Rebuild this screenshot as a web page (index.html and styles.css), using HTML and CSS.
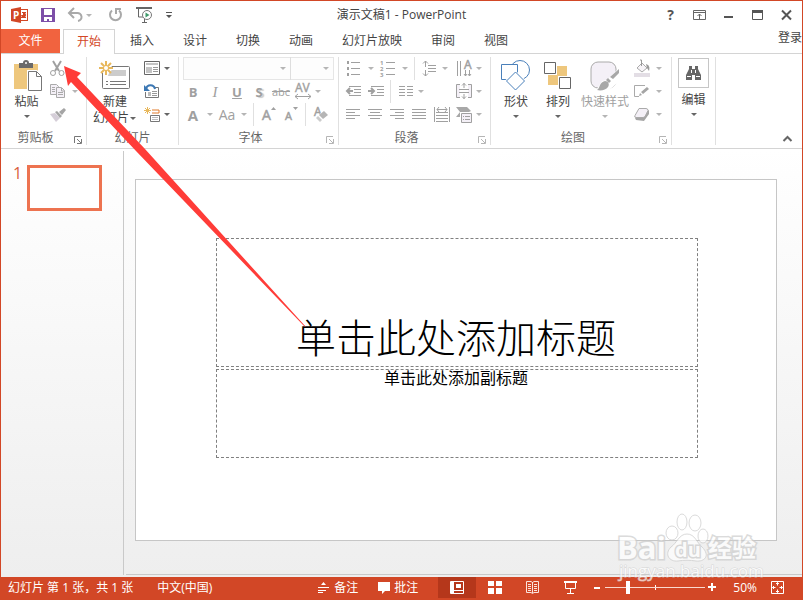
FILE: index.html
```
<!DOCTYPE html>
<html lang="zh-CN">
<head>
    <meta charset="UTF-8">
    <meta name="viewport" content="width=device-width, initial-scale=1.0">
    <title>演示文稿1 - PowerPoint</title>
    <link rel="stylesheet" href="styles.css">
</head>
<body>
    <header class="titlebar">
        <div class="quick">
            <svg class="logo" width="17" height="16" viewBox="0 0 17 16">
                <rect x="8.5" y="2.5" width="8" height="11" fill="#fff" stroke="#d24726"/>
                <path d="M11 5.500h4M10 10.500h5" stroke="#d24726"/>
                <path d="M10 8h2V5.500a2.500 2.500 0 1 1-2 2.500z" fill="#d24726"/>
                <path d="M0 2l10-2v16L0 14z" fill="#d24726"/>
                <text x="2" y="12" font-size="10" font-weight="bold" fill="#fff">P</text>
            </svg>
            <button class="quick-btn" aria-label="保存">
                <svg width="14" height="14" viewBox="0 0 14 14"><path d="M0 0h14v14H0z" fill="#7d4fa8"/><path d="M3 1h8v6H3zM3 9h8v4H8v-2H6v2H3z" fill="#fff"/></svg>
            </button>
            <button class="quick-btn" aria-label="撤消">
                <svg width="15" height="14" viewBox="0 0 15 14"><path d="M2 5h7a4 4 0 0 1 1 8" fill="none" stroke="#a9a9a9" stroke-width="2"/><path d="M6 0L1 5l5 5" fill="none" stroke="#a9a9a9" stroke-width="2"/></svg>
                <span class="drop off"></span>
            </button>
            <button class="quick-btn" aria-label="恢复">
                <svg width="15" height="14" viewBox="0 0 15 14"><path d="M4 2.500a5.500 5.500 0 1 0 7 0" fill="none" stroke="#a9a9a9" stroke-width="2"/><path d="M8 6V1h5" fill="none" stroke="#a9a9a9" stroke-width="2"/></svg>
            </button>
            <button class="quick-btn" aria-label="从头开始放映">
                <svg width="17" height="16" viewBox="0 0 17 16"><path d="M0 1h16" stroke="#666" stroke-width="2"/><path d="M2.500 1v9H7M6 15.500h5M8.500 12v3" fill="none" stroke="#666"/><circle cx="11" cy="8" r="4.500" fill="#fff" stroke="#777"/><path d="M9.500 5.500l4 2.500-4 2.500z" fill="#3f9a6b"/></svg>
            </button>
            <button class="quick-btn" aria-label="自定义快速访问工具栏">
                <svg width="6" height="6" viewBox="0 0 6 6"><path d="M0 0h6v1H0zM0 3h6L3 6z" fill="#555"/></svg>
            </button>
        </div>
        <h1 class="doc-title">演示文稿1 - PowerPoint</h1>
        <div class="window-btns">
            <button class="help" aria-label="帮助">?</button>
            <button aria-label="功能区显示选项"><svg width="13" height="10" viewBox="0 0 13 10"><path d="M.5.500h12v9H.5zM0 2.500h13M6.500 9V4M4.500 6l2-2 2 2" fill="none" stroke="#666"/></svg></button>
            <button aria-label="最小化"><svg width="9" height="10" viewBox="0 0 9 10"><path d="M0 6h9v2H0z" fill="#555"/></svg></button>
            <button aria-label="最大化"><svg width="11" height="10" viewBox="0 0 11 10"><path d="M.5.500h10v9H.5z" fill="none" stroke="#555"/><path d="M0 0h11v3H0z" fill="#555"/></svg></button>
            <button aria-label="关闭"><svg width="11" height="10" viewBox="0 0 11 10"><path d="M1 .5l9 9M10 .5l-9 9" stroke="#555" stroke-width="2"/></svg></button>
        </div>
    </header>

    <nav class="tabs">
        <button class="tab file">文件</button>
        <button class="tab active">开始</button>
        <button class="tab">插入</button>
        <button class="tab">设计</button>
        <button class="tab">切换</button>
        <button class="tab">动画</button>
        <button class="tab">幻灯片放映</button>
        <button class="tab">审阅</button>
        <button class="tab">视图</button>
        <a class="login" href="#">登录</a>
    </nav>

    <section class="ribbon">
        <div class="group clipboard">
            <div class="group-body">
                <button class="big">
                    <span class="big-icon"><svg width="33" height="32" viewBox="-4 0 33 32">
                        <path d="M0 4h24v25H0z" fill="#eec77d"/>
                        <path d="M5 3h4a3 3 0 0 1 6 0h4v5H5z" fill="#6a6a6a"/><circle cx="12" cy="3" r="1" fill="#fff"/>
                        <path d="M13 10h10l6 6v16H13z" fill="#fff"/>
                        <path d="M14.500 11.500h8l5 5v14h-13zM22.500 11.500v5h5" fill="#fff" stroke="#777"/>
                    </svg></span>
                    <span>粘贴</span><span class="drop"></span>
                </button>
                <div class="stack">
                    <button class="tool off" aria-label="剪切"><span class="face"><svg width="16" height="15"><path d="M3 0l6 10M11 0L5 10" stroke="#a0a0a0" stroke-width="2"/><circle cx="3" cy="12" r="2.500" fill="#fff" stroke="#a0a0a0"/><circle cx="11.500" cy="12" r="2.500" fill="#fff" stroke="#a0a0a0"/></svg></span></button>
                    <button class="tool off" aria-label="复制"><span class="face"><svg width="16" height="15"><path d="M.5.500h6l2 2v8h-8z" fill="#f4f0f7" stroke="#aaa"/><path d="M6.500 3.500h5l3 3v7h-8z" fill="#f4f0f7" stroke="#aaa"/><path d="M2 3.500h3M2 5.500h3M2 7.500h3M8 8.500h5M8 10.500h5M11.500 4v3h3" stroke="#aaa" fill="none"/></svg></span><span class="drop"></span></button>
                    <button class="tool off" aria-label="格式刷"><span class="face"><svg width="16" height="15"><path d="M0 7l5-1 5 5-4 4z" fill="#d5ced8"/><path d="M5 5l2-1 5 5-2 2zM9 5l5-4 2 2-4 5z" fill="#a5a5a5"/></svg></span></button>
                </div>
            </div>
            <div class="group-label">剪贴板</div>
            <button class="launcher" aria-label="剪贴板选项"><svg width="8" height="8"><path d="M.5 7V.5H7M3 3l4 4M7.500 3v4.500H3" fill="none" stroke="#777"/></svg></button>
        </div>

        <div class="group slides">
            <div class="group-body">
                <button class="big">
                    <span class="big-icon"><svg width="32" height="30">
                        <rect x="3.5" y="5.5" width="27" height="22" rx="1" fill="#fff" stroke="#777"/>
                        <path d="M11 9h16v6H9z" fill="#ccc"/><path d="M7 20.500h2M11 20.500h16M7 23.500h2M11 23.500h16" stroke="#777"/>
                        <circle cx="7" cy="7" r="6" fill="#fff"/>
                        <path d="M7 0v14M0 7h14M2 2l10 10M12 2L2 12" stroke="#e8b85c" stroke-width="2"/><circle cx="7" cy="7" r="2" fill="#fff"/>
                    </svg></span>
                    <span>新建</span><span class="with-drop">幻灯片<span class="drop"></span></span>
                </button>
                <div class="stack">
                    <button class="tool" aria-label="版式"><span class="face"><svg width="16" height="15"><path d="M.5.500h15v13H.5z" fill="#fff" stroke="#666"/><path d="M2 2h12v2H2zM2 6h6v6H2z" fill="#c4c4c4"/><path d="M9 6.500h5M9 8.500h5M9 10.500h5" stroke="#999"/></svg></span><span class="drop"></span></button>
                    <button class="tool" aria-label="重置"><span class="face"><svg width="16" height="15"><path d="M1.500 8v5.500h13v-10H11" fill="#fff" stroke="#777"/><path d="M4 8h3v4H4z" fill="#bbb"/><path d="M8 7.500h5M8 9.500h5M8 11.500h5" stroke="#999"/><path d="M2 5c1-5 8-5 9 0" fill="none" stroke="#3c78b4" stroke-width="2"/><path d="M0 1v6h6z" fill="#3c78b4"/></svg></span></button>
                    <button class="tool" aria-label="节"><span class="face"><svg width="16" height="15"><path d="M3.500 0v7M0 3.500h7M1 1l5 5M6 1L1 6" stroke="#e8b85c"/><path d="M8 3h7v3H8" fill="none" stroke="#e07b2a"/><path d="M6.500 8.500h9v6h-9z" fill="#fff" stroke="#777"/><path d="M8 10.500h6M8 12.500h6" stroke="#bbb"/></svg></span><span class="drop"></span></button>
                </div>
            </div>
            <div class="group-label">幻灯片</div>
        </div>

        <div class="group font">
            <div class="group-body rows">
                <div class="row combos">
                    <label class="combo"><select aria-label="字体" disabled><option></option></select></label>
                    <label class="combo size"><select aria-label="字号" disabled><option></option></select></label>
                </div>
                <div class="row">
                    <button class="tool off" aria-label="加粗"><b class="face">B</b></button>
                    <button class="tool off" aria-label="倾斜"><i class="face italic">I</i></button>
                    <button class="tool off" aria-label="下划线"><u class="face strong">U</u></button>
                    <button class="tool off" aria-label="文字阴影"><span class="face strong shadow">S</span></button>
                    <button class="tool off" aria-label="删除线"><s class="face small">abc</s></button>
                    <button class="tool off" aria-label="字符间距"><span class="face"><svg width="18" height="17"><text x="1" y="9" font-size="12" fill="#a0a0a0" stroke="#a0a0a0" stroke-width=".4">AV</text><path d="M1 13.500h16M4 11l-3 2.500L4 16M14 11l3 2.500-3 2.500" fill="none" stroke="#a0a0a0"/></svg></span><span class="drop tight"></span></button>
                </div>
                <div class="row">
                    <button class="tool off" aria-label="字体颜色"><span class="face strong large">A</span><span class="drop"></span></button>
                    <button class="tool off" aria-label="更改大小写"><span class="face medium">Aa</span><span class="drop"></span></button>
                    <span class="sep"></span>
                    <button class="tool off" aria-label="增大字号"><span class="face"><svg width="14" height="15"><text x="0" y="13" font-size="14" fill="#a0a0a0" stroke="#a0a0a0" stroke-width=".5">A</text><path d="M9 3h5l-2.500-3z" fill="#a0a0a0"/></svg></span></button>
                    <button class="tool off" aria-label="减小字号"><span class="face"><svg width="14" height="15"><text x="1" y="13" font-size="11" fill="#a0a0a0" stroke="#a0a0a0" stroke-width=".5">A</text><path d="M9 0h5l-2.500 3z" fill="#a0a0a0"/></svg></span></button>
                    <span class="sep"></span>
                    <button class="tool off" aria-label="清除格式"><span class="face"><svg width="16" height="15"><text x="1" y="9" font-size="12" fill="#a0a0a0" stroke="#a0a0a0" stroke-width=".5">A</text><path d="M3 11l8-8 5 5-8 7z" fill="#fff"/><path d="M6 8l5-4 4 4-5 4z" fill="#b5b5b5"/><path d="M3 11l2-2 4 4-2 2z" fill="#ccc"/></svg></span></button>
                </div>
            </div>
            <div class="group-label">字体</div>
            <button class="launcher off" aria-label="字体选项"><svg width="8" height="8"><path d="M.5 7V.5H7M3 3l4 4M7.500 3v4.500H3" fill="none" stroke="#b5b5b5"/></svg></button>
        </div>

        <div class="group paragraph">
            <div class="group-body rows">
                <div class="row">
                    <button class="tool off" aria-label="项目符号"><span class="face"><svg width="16" height="15"><path d="M5 1.500h9M5 7.500h9M5 13.500h9" stroke="#a0a0a0"/><path d="M1 0h2v3H1zM1 6h2v3H1zM1 12h2v3H1z" fill="#a0a0a0"/></svg></span><span class="drop"></span></button>
                    <button class="tool off" aria-label="编号"><span class="face"><svg width="16" height="17"><path d="M6 2.500h9M6 8.500h9M6 14.500h9" stroke="#a0a0a0"/><g font-size="6" font-weight="bold" fill="#a0a0a0"><text x="0" y="5">1</text><text x="0" y="11">2</text><text x="0" y="17">3</text></g></svg></span><span class="drop"></span></button>
                    <span class="sep"></span>
                    <button class="tool off" aria-label="行距"><span class="face"><svg width="16" height="17"><path d="M6 5.500h8M6 8.500h8M6 11.500h8M3.500 1v6M1 3.500L3.500 1 6 3.500M3.500 10v6M1 13.500L3.500 16 6 13.500" fill="none" stroke="#a0a0a0"/></svg></span><span class="drop tight"></span></button>
                    <button class="tool off end" aria-label="文字方向"><span class="face"><svg width="16" height="17"><path d="M1.500 1v15M4.500 1v15M9.500 10v6M13.500 10v6M8 14l1.500 2 1.500-2M12 14l1.500 2 1.500-2" fill="none" stroke="#a0a0a0"/><text x="8" y="9" font-size="12" fill="#a0a0a0" stroke="#a0a0a0" stroke-width=".5">A</text></svg></span><span class="drop tight"></span></button>
                </div>
                <div class="row">
                    <button class="tool off" aria-label="降低列表级别"><span class="face"><svg width="16" height="11"><path d="M3 .5h12M8 3.500h7M8 6.500h7M3 9.500h12" stroke="#a0a0a0"/><path d="M1 5h6M4 2L1 5l3 3" fill="none" stroke="#a0a0a0" stroke-width="2"/></svg></span></button>
                    <button class="tool off" aria-label="提高列表级别"><span class="face"><svg width="16" height="11"><path d="M3 .5h13M9 3.500h7M9 6.500h7M3 9.500h13" stroke="#a0a0a0"/><path d="M0 5h6M3 2l3 3-3 3" fill="none" stroke="#a0a0a0" stroke-width="2"/></svg></span></button>
                    <span class="sep"></span>
                    <button class="tool off" aria-label="分栏"><span class="face"><svg width="14" height="11"><path d="M0 .5h6M0 3.500h6M0 6.500h6M0 9.500h6M8 .5h6M8 3.500h6M8 6.500h6M8 9.500h6" stroke="#a0a0a0"/></svg></span><span class="drop tight"></span></button>
                    <button class="tool off end" aria-label="对齐文本"><span class="face"><svg width="16" height="17"><path d="M4 1.500H.5v13H4M12 1.500h3.500v13H12" fill="#f4f0f7" stroke="#a0a0a0"/><path d="M3 6.500h10M3 9.500h10M8 0v5M6 2.500l2-2 2 2M8 11v5M6 13.500l2 2 2-2" fill="none" stroke="#a0a0a0"/></svg></span><span class="drop tight"></span></button>
                </div>
                <div class="row">
                    <button class="tool off" aria-label="左对齐"><span class="face"><svg width="16" height="11"><path d="M0 .5h14M0 3.500h9M0 6.500h14M0 9.500h9" stroke="#a0a0a0"/></svg></span></button>
                    <button class="tool off" aria-label="居中"><span class="face"><svg width="16" height="11"><path d="M0 .5h14M2 3.500h10M0 6.500h14M2 9.500h10" stroke="#a0a0a0"/></svg></span></button>
                    <button class="tool off" aria-label="右对齐"><span class="face"><svg width="16" height="11"><path d="M0 .5h14M5 3.500h9M0 6.500h14M5 9.500h9" stroke="#a0a0a0"/></svg></span></button>
                    <button class="tool off" aria-label="两端对齐"><span class="face"><svg width="16" height="11"><path d="M0 .5h14M0 3.500h14M0 6.500h14M0 9.500h14" stroke="#a0a0a0"/></svg></span></button>
                    <button class="tool off" aria-label="分散对齐"><span class="face"><svg width="16" height="17"><path d="M.5 1v15M15.500 1v15M2 6.500h12M2 9.500h12M2 12.500h12M2 15.500h12M3 3.500h10M5 1L3 3.500 5 6M11 1l2 2.500L11 6" fill="none" stroke="#a0a0a0"/></svg></span></button>
                    <button class="tool off end" aria-label="转换为 SmartArt"><span class="face"><svg width="16" height="17"><path d="M0 1h11l4 4-2 1H5v5H0l4-5z" fill="#a8a8a8"/><path d="M4 6h12v11H4z" fill="#fff"/><path d="M5.500 7.500h10v9h-10z" fill="#f4f0f7" stroke="#a0a0a0"/><path d="M7 10.500h1M9 10.500h5M7 13.500h1M9 13.500h5" stroke="#a0a0a0"/></svg></span><span class="drop tight"></span></button>
                </div>
            </div>
            <div class="group-label">段落</div>
            <button class="launcher off" aria-label="段落选项"><svg width="8" height="8"><path d="M.5 7V.5H7M3 3l4 4M7.500 3v4.500H3" fill="none" stroke="#b5b5b5"/></svg></button>
        </div>

        <div class="group drawing">
            <div class="group-body">
                <button class="big">
                    <span class="big-icon"><svg width="32" height="32"><circle cx="20" cy="10" r="9.500" fill="#fff" stroke="#4a80ba"/><path d="M1.500 4.500h16v15h-16z" fill="#fff" stroke="#4a80ba"/><path d="M15.500 10.500L26 20.500 15.500 31 5 20.500z" fill="#fff"/><path d="M15.500 12l9 9-9 9-9-9z" fill="#fff" stroke="#4a80ba"/></svg></span>
                    <span>形状</span><span class="drop"></span>
                </button>
                <button class="big">
                    <span class="big-icon"><svg width="28" height="28"><path d="M13 4h10v10H13zM4 13h10v10H4z" fill="#eec77d"/><path d="M.5.500h11v11H.5zM15.500 15.500h11v11h-11z" fill="#fff" stroke="#666"/></svg></span>
                    <span>排列</span><span class="drop"></span>
                </button>
                <button class="big wide off">
                    <span class="big-icon"><svg width="30" height="32"><rect x="1" y="2" width="25" height="26" rx="7" fill="#f4f0f7" stroke="#aaa"/><path d="M31 6L17 20l-5 1-5 8-2 2h12l6-4 8-8z" fill="#fff"/><path d="M29 9v4l-6 6-3-2zM18 18l3 3-2 2-3-3z" fill="#a8a8a8"/><path d="M15 21c3 0 5 3 3 6-2 3-7 4-11 3 3-1 2-8 8-9z" fill="#a8a8a8"/></svg></span>
                    <span>快速样式</span><span class="drop"></span>
                </button>
                <div class="stack">
                    <button class="tool off" aria-label="形状填充"><span class="face"><svg width="16" height="17"><path d="M8 3l5 5-5 4-5-4z" fill="#f7f4f8" stroke="#aaa"/><path d="M7.500 6V0H6" fill="none" stroke="#999"/><path d="M12 4c3 1 4 3 3 7l-2-3z" fill="#999"/><path d="M0 13h16v4H0z" fill="#e3dee5"/></svg></span><span class="drop"></span></button>
                    <button class="tool off" aria-label="形状轮廓"><span class="face"><svg width="16" height="13"><path d="M11 .5H.5v11H5" fill="none" stroke="#aaa"/><path d="M5 11l1-3 2 2zM7 7l6-5 2 2-6 5z" fill="#a5a5a5"/></svg></span><span class="drop"></span></button>
                    <button class="tool off" aria-label="形状效果"><span class="face"><svg width="16" height="13"><path d="M1 10l1 2 8 1 5-7V2z" fill="#a5a5a5"/><path d="M5 .5h7q2 0 2 2l-3 6q-1 1-2 1H2q-2 0-1-2z" fill="#f4f0f7" stroke="#aaa"/></svg></span><span class="drop"></span></button>
                </div>
            </div>
            <div class="group-label">绘图</div>
            <button class="launcher off" aria-label="绘图选项"><svg width="8" height="8"><path d="M.5 7V.5H7M3 3l4 4M7.500 3v4.500H3" fill="none" stroke="#b5b5b5"/></svg></button>
        </div>

        <div class="group editing">
            <button class="edit">
                <span class="edit-icon"><svg width="15" height="14" viewBox="0 0 15 14"><path d="M3 0h3v3h3V0h3v3l3 6v5H9V9H6v5H0V9l3-6z" fill="#666"/><path d="M1 10.500h4M10 10.500h4M5.500 4v3M9.500 4v3" stroke="#fff"/></svg></span>
                <span>编辑</span><span class="drop"></span>
            </button>
        </div>
        <button class="collapse" aria-label="折叠功能区"><svg width="9" height="6" viewBox="0 0 9 6"><path d="M.5 5l4-4 4 4" fill="none" stroke="#666" stroke-width="2"/></svg></button>
    </section>

    <main class="workspace">
        <aside class="thumbs">
            <span class="thumb-no">1</span>
            <button class="thumb" aria-label="幻灯片 1"></button>
        </aside>
        <div class="stage">
            <article class="slide">
                <h2 class="holder holder-title">单击此处添加标题</h2>
                <p class="holder holder-sub">单击此处添加副标题</p>
            </article>
        </div>
    </main>

    <footer class="status">
        <span class="slide-count">幻灯片 第 1 张，共 1 张</span>
        <span>中文(中国)</span>
        <button class="note first"><svg width="12" height="11"><path d="M3 3h5L5.500 0zM0 5h11v1H0zM0 8h8v1H0zM0 10h5v1H0z" fill="#fff"/></svg>备注</button>
        <button class="note"><svg width="12" height="12"><path d="M0 0h12v9H7l-3 3V9H0z" fill="#fff"/></svg>批注</button>
        <div class="views">
            <button class="view on" aria-label="普通视图"><svg width="14" height="13"><path d="M.5.500h13v12H.5zM3.500 0v13M3.500 9.500h10" fill="none" stroke="#fff"/><path d="M1 1h3v11H1zM6 3h5v4H6z" fill="#fff"/></svg></button>
            <button class="view" aria-label="幻灯片浏览"><svg width="14" height="13"><path d="M0 0h6v5H0zM8 0h6v5H8zM0 7h6v6H0zM8 7h6v6H8z" fill="#fff"/></svg></button>
            <button class="view" aria-label="阅读视图"><svg width="14" height="13"><path d="M.5.500H5l1.500 1L8 .5h4.500v11H8l-1.500 1-1.500-1H.5zM6.500 1v11M2 3.500h3M2 5.500h3M2 7.500h3M2 9.500h3M8 3.500h3M8 5.500h3M8 7.500h3M8 9.500h3" fill="none" stroke="#fbe3dc"/></svg></button>
            <button class="view" aria-label="幻灯片放映"><svg width="14" height="13"><path d="M0 1h13" stroke="#fff" stroke-width="2"/><path d="M1.500 2v5.500h10V2M6.500 8v4M3 12.500h7" fill="none" stroke="#fff"/></svg></button>
        </div>
        <button class="zoom-btn" aria-label="缩小"><svg width="7" height="9"><path d="M0 4h6v2H0z" fill="#fff"/></svg></button>
        <input class="zoom" type="range" min="0" max="100" value="22" aria-label="显示比例">
        <button class="zoom-btn" aria-label="放大"><svg width="9" height="9"><path d="M0 3h3V0h2v3h3v2H5v3H3V5H0z" fill="#fff"/></svg></button>
        <span class="percent">50%</span>
        <button class="fit" aria-label="使幻灯片适应当前窗口"><svg width="13" height="13"><path d="M.5.500h12v12H.5zM6.500 1.500v3M6.500 8.500v3M1.500 6.500h3M8.500 6.500h3M5 3l1.500-1.500L8 3M5 10l1.500 1.500L8 10M3 5L1.500 6.500 3 8M10 5l1.500 1.500L10 8" fill="none" stroke="#fff"/></svg></button>
    </footer>

    <svg class="arrow" width="310" height="330" viewBox="0 0 310 330"><path d="M64 66l17 7-4 4 68 72 161 178-2-1-168-175-65-69-3 4z" fill="#ff3c38"/></svg>

    <svg class="watermark" width="150" height="75" viewBox="0 0 150 75">
        <g fill="#fff" stroke="#ccc">
            <ellipse cx="58" cy="22" rx="6" ry="7"/><ellipse cx="68" cy="11" rx="5" ry="8"/><ellipse cx="81" cy="12" rx="6" ry="8"/><ellipse cx="89" cy="25" rx="5" ry="7"/>
            <path d="M73 23c8 0 10 9 15 13 9 9 2 15-6 14-6-1-12-1-18 0-9 1-14-7-7-14 6-4 8-13 16-13z"/>
            <g font-weight="bold" stroke-width="3" paint-order="stroke">
                <text x="3" y="48" font-size="31">Bai</text>
                <text x="61" y="46" font-size="20">du</text>
                <text x="94" y="46" font-size="24">经验</text>
            </g>
            <text x="5" y="66" font-size="17" stroke-width="1" paint-order="stroke">jingyan.baidu.com</text>
        </g>
    </svg>
</body>
</html>
```
FILE: styles.css
```
* {
    box-sizing: border-box;
}
body {
    margin: 0;
    min-height: 100vh;
    display: flex;
    flex-direction: column;
    position: relative;
    border: 1px solid #d24726;
    border-bottom: 0;
    background: #fff;
    color: #444;
    font-family: "Open Sans", "Noto Sans CJK SC", sans-serif;
    font-size: 12px;
    line-height: 16px;
    overflow: hidden;
}
button {
    display: flex;
    align-items: center;
    justify-content: center;
    padding: 0;
    border: 0;
    background: none;
    color: inherit;
    font: inherit;
    white-space: nowrap;
}
svg {
    display: block;
    flex: none;
    overflow: visible;
}

/* title bar */
.titlebar {
    display: grid;
    grid-template-columns: 1fr auto 1fr;
    align-items: center;
    height: 28px;
}
.quick {
    display: flex;
    align-items: center;
    gap: 13px;
    padding-left: 10px;
}
.quick-btn {
    height: 24px;
}
.doc-title {
    margin: 0;
    font-size: 12px;
    font-weight: normal;
}
.window-btns {
    display: flex;
    justify-content: flex-end;
    padding-right: 1px;
}
.window-btns button {
    width: 29px;
    height: 28px;
}
.window-btns .help {
    font-size: 14px;
    font-weight: bold;
    color: #555;
}

/* tabs */
.tabs {
    display: flex;
    gap: 1px;
    height: 25px;
    border-bottom: 1px solid #d4d4d4;
}
.tab {
    height: 24px;
    padding: 0 14px;
}
.tab.file {
    width: 59px;
    margin-right: 2px;
    background: #f1633f;
    color: #fff;
}
.tab.active {
    height: 25px;
    padding: 0 13px 1px;
    border: 1px solid #d4d4d4;
    border-bottom: 0;
    background: #fff;
    color: #d24726;
}
.login {
    margin-left: auto;
    padding-top: 1px;
    color: #444;
    text-decoration: none;
}

/* ribbon */
.ribbon {
    display: flex;
    position: relative;
    padding: 3px 0;
    border-bottom: 1px solid #d4d4d4;
}
.group {
    position: relative;
    height: 88px;
    border-right: 1px solid #e0e0e0;
}
.clipboard {
    width: 86px;
}
.slides {
    width: 92px;
}
.font {
    width: 160px;
}
.paragraph {
    width: 152px;
}
.drawing {
    width: 181px;
}
.editing {
    width: 44px;
}
.group-body {
    display: flex;
    height: 69px;
    padding-left: 4px;
}
.group-body.rows {
    flex-direction: column;
    padding: 0 7px 0 4px;
}
.clipboard .group-body {
    padding-left: 5px;
}
.font .group-body {
    padding: 0 4px 0 3px;
}
.slides .group-body {
    padding-left: 2px;
}
.group-label {
    padding: 4px 16px 0 0;
    text-align: center;
    color: #666;
}
.slides .group-label {
    padding-right: 0;
}
.launcher {
    position: absolute;
    right: 4px;
    bottom: 1px;
}
.row {
    display: flex;
    height: 23px;
}
.combos {
    padding-left: 1px;
}
.tool {
    height: 23px;
}
.stack .tool {
    justify-content: flex-start;
}
.off {
    color: #a0a0a0;
}
.end {
    margin-left: auto;
}
.face {
    display: flex;
    align-items: center;
    justify-content: center;
    width: 22px;
    height: 21px;
    font-size: 13px;
}
.strong {
    font-weight: bold;
}
.medium {
    font-size: 14px;
}
.large {
    font-size: 15px;
}
.small {
    font-size: 11px;
}
.italic {
    font-family: "Liberation Serif", serif;
    font-size: 15px;
}
.shadow {
    text-shadow: 2px 1px 1px #ccc;
}
.drop {
    display: flex;
    justify-content: center;
    width: 12px;
    color: #666;
}
.drop.tight,
.slides .drop {
    width: 8px;
}
.drop::before {
    content: "";
    border: 3px solid transparent;
    border-top-color: currentColor;
    border-bottom: 0;
}
.off .drop,
.drop.off {
    color: #b5b5b5;
}
.sep {
    width: 8px;
    border-right: 1px solid #e0e0e0;
    margin: 0 4px 0 -4px;
}
.big {
    flex-direction: column;
    justify-content: flex-start;
    width: 42px;
    height: 69px;
}
.clipboard .big {
    width: 41px;
}
.slides .big {
    width: 52px;
}
.big.wide {
    width: 52px;
}
.big-icon {
    display: flex;
    align-items: center;
    justify-content: center;
    height: 36px;
    margin-top: 1px;
}
.big > .drop {
    margin-top: 5px;
}
.with-drop {
    display: flex;
    align-items: center;
}
.combo {
    display: flex;
    flex: 1;
    position: relative;
}
.combo.size {
    flex: 0 0 44px;
    margin-left: -1px;
}
.combo select {
    appearance: none;
    width: 100%;
    border: 1px solid #dcdcdc;
    border-radius: 0;
    background: #fdfdfd;
}
.combo::after {
    content: "";
    position: absolute;
    right: 5px;
    top: 10px;
    border: 3px solid transparent;
    border-top-color: #b5b5b5;
    border-bottom: 0;
}
.edit {
    flex-direction: column;
    margin: 1px auto 0;
}
.edit-icon {
    display: flex;
    align-items: center;
    justify-content: center;
    width: 31px;
    height: 30px;
    margin-bottom: 4px;
    border: 1px solid #c6c6c6;
}
.edit > .drop {
    margin-top: 5px;
}
.collapse {
    margin: auto 10px 3px auto;
}

/* workspace */
.workspace {
    display: flex;
    flex: 1;
    padding: 2px 0;
    background: linear-gradient(#fff, #eee);
}
.thumbs {
    display: flex;
    align-items: flex-start;
    gap: 5px;
    width: 123px;
    padding: 14px 0 0 12px;
    border-right: 1px solid #c9c9c9;
}
.thumb-no {
    font-size: 16px;
    color: #d9603f;
}
.thumb {
    width: 75px;
    height: 46px;
    border: 3px solid #ed7350;
    background: #fff;
}
.stage {
    display: flex;
    flex: 1;
    margin-left: 2px;
    padding: 28px 25px 33px 9px;
    border-bottom: 1px solid #c9c9c9;
}
.slide {
    display: grid;
    flex: 1;
    grid-template-rows: 129fr 89fr;
    gap: 2px;
    padding: 58px 78px 82px 80px;
    border: 1px solid #c6c6c6;
    background: #fff;
    color: #000;
}
.holder {
    display: flex;
    justify-content: center;
    margin: 0;
    padding-right: 2px;
    border: 1px dashed #808080;
    font-weight: normal;
}
.holder-title {
    align-items: flex-end;
    padding-bottom: 4px;
    font-size: 40px;
    font-weight: 300;
    line-height: 48px;
}
.holder-sub {
    font-size: 16px;
}

/* status bar */
.status {
    display: flex;
    align-items: center;
    height: 23px;
    padding: 0 18px 2px 7px;
    background: #d24726;
    color: #fff;
}
.slide-count {
    margin-right: 24px;
}
.note {
    gap: 4px;
    margin-right: 20px;
}
.note.first {
    margin-left: auto;
}
.views {
    display: flex;
}
.view {
    width: 38px;
    height: 21px;
}
.view.on {
    background: #b5371b;
}
.zoom-btn {
    width: 15px;
    height: 21px;
}
.zoom {
    appearance: none;
    width: 100px;
    height: 13px;
    margin: 0;
    background:
        linear-gradient(#fbd9cf, #fbd9cf) center / 100% 1px no-repeat,
        linear-gradient(#fff, #fff) center / 1px 5px no-repeat;
}
.zoom::-webkit-slider-thumb {
    appearance: none;
    width: 4px;
    height: 13px;
    background: #fff;
}
.percent {
    margin: 0 14px 0 13px;
}

.arrow {
    position: absolute;
    left: -1px;
    top: -1px;
    pointer-events: none;
}
.watermark {
    position: absolute;
    right: 38px;
    bottom: 14px;
    opacity: 0.7;
    pointer-events: none;
}
```
